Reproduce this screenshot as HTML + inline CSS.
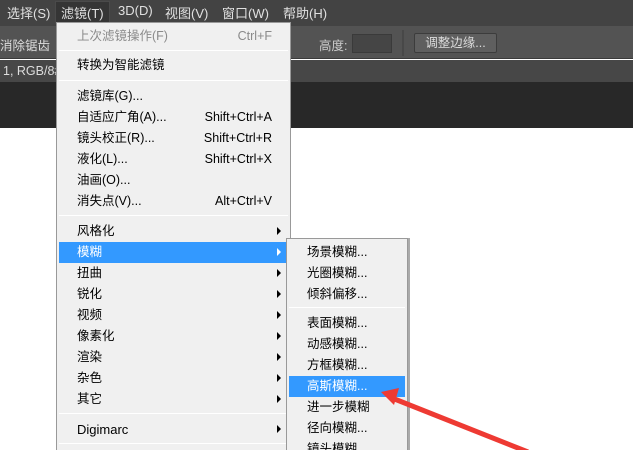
<!DOCTYPE html><html><head><meta charset="utf-8"><style>
*{margin:0;padding:0;box-sizing:border-box}
html{width:633px;height:450px;overflow:hidden}
body{width:633px;height:450px;overflow:hidden;position:relative;background:#fff;font-family:"Liberation Sans","Noto Sans CJK SC",sans-serif;font-size:12.5px}
.a{position:absolute;white-space:nowrap}
.mb{left:0;top:0;width:633px;height:26px;background:#434343}
.mb span{position:absolute;top:3px;color:#e0e0e0;font-size:13px}
.ob{left:0;top:26px;width:633px;height:33px;background:#535353;border-bottom:1px solid #3a3a3a}
.tb{left:0;top:60px;width:633px;height:22px;background:#474747}
.dk{left:0;top:82px;width:633px;height:46px;background:#282828}
.menu{background:#f0f0f0;border:1px solid #999;border-bottom:none;color:#000;overflow:hidden}
.it{position:absolute;left:20px;height:21px;line-height:21px}
.sc{position:absolute;right:18px;height:21px;line-height:21px}
.ar{position:absolute;right:9px;width:0;height:0;border-left:4px solid #000;border-top:4px solid transparent;border-bottom:4px solid transparent}
.sep{position:absolute;left:2px;right:2px;height:1px;background:#b9b9b9;border-bottom:1px solid #fff}
.hl{position:absolute;background:#3399ff}
</style></head><body>
<div class="a mb">
<span style="left:7px">选择(S)</span>
<div class="a" style="left:55px;top:1px;width:55px;height:23px;background:#353535;border:1px solid #4a4a4a"></div>
<span style="left:61px">滤镜(T)</span>
<span style="left:118px">3D(D)</span>
<span style="left:165px">视图(V)</span>
<span style="left:222px">窗口(W)</span>
<span style="left:283px">帮助(H)</span>
</div>
<div class="a ob">
<span class="a" style="left:0;top:9px;color:#ddd">消除锯齿</span>
<span class="a" style="left:319px;top:9px;color:#ccc">高度:</span>
<div class="a" style="left:352px;top:8px;width:40px;height:19px;background:#454545;border:1px solid #3a3a3a"></div>
<div class="a" style="left:402px;top:4px;width:2px;height:26px;background:#484848"></div>
<div class="a" style="left:414px;top:7px;width:83px;height:20px;background:#5f5f5f;border:1px solid #3c3c3c;border-radius:2px;color:#ddd;text-align:center;line-height:18px">调整边缘...</div>
</div>
<div class="a tb"><span class="a" style="left:3px;top:4px;color:#ddd">1, RGB/8#</span></div>
<div class="a dk"></div>

<div class="a menu" style="left:56px;top:22px;width:235px;height:428px">
<span class="it" style="top:3px;color:#8a8a8a">上次滤镜操作(F)</span><span class="sc" style="top:3px;color:#8a8a8a">Ctrl+F</span>
<div class="sep" style="top:27px"></div>
<span class="it" style="top:32px">转换为智能滤镜</span>
<div class="sep" style="top:57px"></div>
<span class="it" style="top:63px">滤镜库(G)...</span>
<span class="it" style="top:84px">自适应广角(A)...</span><span class="sc" style="top:84px">Shift+Ctrl+A</span>
<span class="it" style="top:105px">镜头校正(R)...</span><span class="sc" style="top:105px">Shift+Ctrl+R</span>
<span class="it" style="top:126px">液化(L)...</span><span class="sc" style="top:126px">Shift+Ctrl+X</span>
<span class="it" style="top:147px">油画(O)...</span>
<span class="it" style="top:168px">消失点(V)...</span><span class="sc" style="top:168px">Alt+Ctrl+V</span>
<div class="sep" style="top:192px"></div>
<span class="it" style="top:198px">风格化</span><div class="ar" style="top:204px"></div>
<div class="hl" style="left:2px;top:219px;width:229px;height:21px"></div>
<span class="it" style="top:219px;color:#fff">模糊</span><div class="ar" style="top:225px;border-left-color:#fff"></div>
<span class="it" style="top:240px">扭曲</span><div class="ar" style="top:246px"></div>
<span class="it" style="top:261px">锐化</span><div class="ar" style="top:267px"></div>
<span class="it" style="top:282px">视频</span><div class="ar" style="top:288px"></div>
<span class="it" style="top:303px">像素化</span><div class="ar" style="top:309px"></div>
<span class="it" style="top:324px">渲染</span><div class="ar" style="top:330px"></div>
<span class="it" style="top:345px">杂色</span><div class="ar" style="top:351px"></div>
<span class="it" style="top:366px">其它</span><div class="ar" style="top:372px"></div>
<div class="sep" style="top:390px"></div>
<span class="it" style="top:396px;font-size:13px">Digimarc</span><div class="ar" style="top:402px"></div>
<div class="sep" style="top:420px"></div>
</div>

<div class="a menu" style="left:286px;top:238px;width:122px;height:212px;box-shadow:2px 0 0 #aaa">
<span class="it" style="top:3px">场景模糊...</span>
<span class="it" style="top:24px">光圈模糊...</span>
<span class="it" style="top:45px">倾斜偏移...</span>
<div class="sep" style="top:68px"></div>
<span class="it" style="top:74px">表面模糊...</span>
<span class="it" style="top:95px">动感模糊...</span>
<span class="it" style="top:116px">方框模糊...</span>
<div class="hl" style="left:2px;top:137px;width:116px;height:21px"></div>
<span class="it" style="top:137px;color:#fff">高斯模糊...</span>
<span class="it" style="top:158px">进一步模糊</span>
<span class="it" style="top:179px">径向模糊...</span>
<span class="it" style="top:200px">镜头模糊...</span>
</div>

<svg class="a" style="left:0;top:0" width="633" height="450">
<line x1="528" y1="452" x2="392" y2="398" stroke="#ee3a33" stroke-width="5"/>
<polygon points="381,392 399,388 394,405" fill="#ee3a33"/>
</svg>
</body></html>
